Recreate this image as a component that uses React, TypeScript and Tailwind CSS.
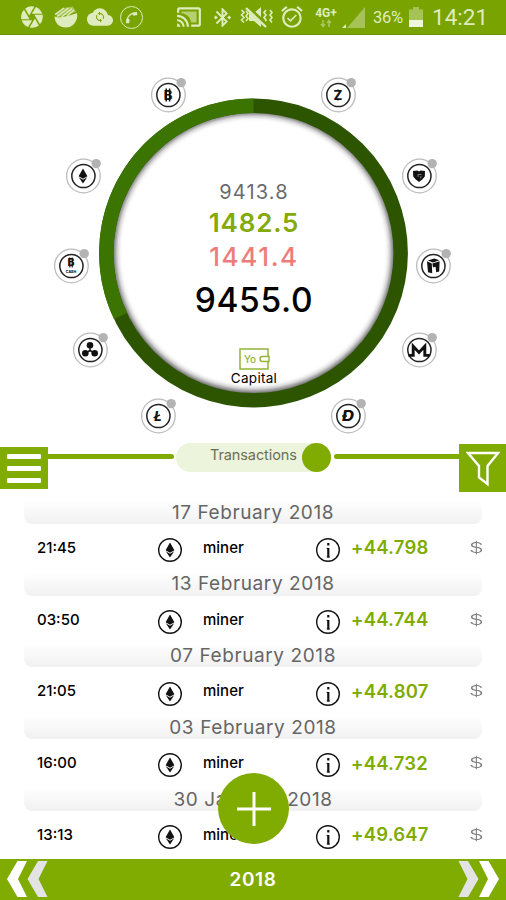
import React from 'react';
import {
  MdAlarmOn,
  MdBluetoothConnected,
  MdCamera,
  MdCast,
  MdCloud,
  MdPhone,
  MdSync,
} from 'react-icons/md';

const transactions = [
  { date: '17 February 2018', time: '21:45', name: 'miner', amount: '+44.798' },
  { date: '13 February 2018', time: '03:50', name: 'miner', amount: '+44.744' },
  { date: '07 February 2018', time: '21:05', name: 'miner', amount: '+44.807' },
  { date: '03 February 2018', time: '16:00', name: 'miner', amount: '+44.732' },
  { date: '30 January 2018', time: '13:13', name: 'miner', amount: '+49.647' },
];

const coins = [
  { id: 'btc', position: 'left-[150px] top-[42px]' },
  { id: 'zec', position: 'left-[320px] top-[42px]' },
  { id: 'eth', position: 'left-[65px] top-[123px]' },
  { id: 'nav', position: 'left-[401px] top-[123px]' },
  { id: 'bch', position: 'left-[53px] top-[213px]' },
  { id: 'neo', position: 'left-[415px] top-[213px]' },
  { id: 'xrp', position: 'left-[72px] top-[297px]' },
  { id: 'xmr', position: 'left-[401px] top-[297px]' },
  { id: 'ltc', position: 'left-[140px] top-[363px]' },
  { id: 'dash', position: 'left-[330px] top-[363px]' },
];

const EthMark = () => (
  <g fill="#111">
    <path d="M0 -7.5 L4.4 0.2 L0 2.8 L-4.4 0.2 Z" />
    <path d="M-4.2 1.2 L0 3.7 L4.2 1.2 L0 7.6 Z" />
  </g>
);

const CoinMark = ({ id }: { id: string }) => {
  switch (id) {
    case 'btc':
      return (
        <g>
          <path d="M-1.8 -6.6V6.6M1.6 -6.6V6.6" stroke="#111" strokeWidth="1.5" />
          <text y="4.7" textAnchor="middle" fontSize="13" fontWeight="800">
            B
          </text>
        </g>
      );
    case 'zec':
      return (
        <g>
          <text y="4.6" textAnchor="middle" fontSize="13" fontWeight="800">
            Z
          </text>
          <path d="M0 -5.6V-4M0 4V5.6" stroke="#111" strokeWidth="1.4" />
        </g>
      );
    case 'eth':
      return <EthMark />;
    case 'nav':
      return (
        <g>
          <path
            d="M-6 -5 L-1.5 -5.6 L0 -4.6 L1.5 -5.6 L6 -5 L5.8 0.5 L3.5 3.2 L0 6 L-3.5 3.2 L-5.8 0.5 Z"
            fill="#111"
          />
          <path d="M-1 1V-1.6L2.6 -1.4M1.5 2.4L2 0" stroke="#999" strokeWidth="0.8" fill="none" />
        </g>
      );
    case 'bch':
      return (
        <g>
          <path d="M-1.2 -8.5V1.5M1.2 -8.5V1.5" stroke="#111" strokeWidth="1.1" />
          <text y="0.2" textAnchor="middle" fontSize="10.5" fontWeight="800">
            B
          </text>
          <text y="7" textAnchor="middle" fontSize="3.6" fontWeight="800">
            CASH
          </text>
        </g>
      );
    case 'neo':
      return (
        <g fill="#111">
          <path d="M-6 -4.8 L-5 6.2 L-0.8 7.2 L-1.2 -2.6 Z" />
          <path d="M-5.2 -5.4 L1.2 -7.4 L6.4 -5.8 L0 -3.4 Z" />
          <path d="M-0.6 -2.4 L6.6 -4.8 L6.2 5.4 L3.2 6.2 L2.6 0.8 L0 1.4 Z" />
        </g>
      );
    case 'xrp':
      return (
        <g fill="#111">
          <path d="M0 -5V0.5L-5 3.5M0 0.5L5 3.5" stroke="#111" strokeWidth="1.5" fill="none" />
          <circle cy="-4.8" r="3.3" />
          <circle cx="-4.7" cy="3.2" r="3.3" />
          <circle cx="4.7" cy="3.2" r="3.3" />
        </g>
      );
    case 'xmr':
      return (
        <path
          d="M-10.6 5.4H-5.8V-3.8L0 2.4L5.8 -3.8V5.4H10.6"
          stroke="#111"
          strokeWidth="2.9"
          fill="none"
        />
      );
    case 'ltc':
      return (
        <g>
          <text y="4.8" textAnchor="middle" fontSize="13" fontWeight="800" fontStyle="italic">
            L
          </text>
          <path d="M-4.4 1.8L2 -1.2" stroke="#111" strokeWidth="1.4" />
        </g>
      );
    default:
      return (
        <g>
          <text
            x="-6"
            y="4.9"
            textLength="12"
            lengthAdjust="spacingAndGlyphs"
            fontSize="14"
            fontWeight="800"
            fontStyle="italic"
          >
            D
          </text>
          <path d="M-6 0H-1" stroke="#111" strokeWidth="1.3" />
        </g>
      );
  }
};

const Coin = ({ id, position }: { id: string; position: string }) => {
  return (
    <button className={`absolute size-9 ${position}`}>
      <svg viewBox="-18 -18 36 36" className="size-9 overflow-visible" fill="#111">
        <circle cx="0.4" r="16.8" fill="#fff" stroke="#bcbcbc" strokeWidth="1.3" />
        <circle cx="0.4" r="11.6" fill="none" stroke="#222" strokeWidth="1.5" />
        <circle cx="13.2" cy="-12.4" r="4.7" fill="#b3b3b3" />
        <CoinMark id={id} />
      </svg>
    </button>
  );
};

const StatusBar = () => {
  return (
    <header className="flex h-[35px] shrink-0 items-center border-b border-[#6c9100] bg-[#79a300] pl-[19px] font-[Roboto,sans-serif] text-[#dfecbd]">
      <MdCamera className="size-[26px]" />
      <svg viewBox="0 0 24 24" className="ml-[9px] size-6" fill="currentColor">
        <path d="M0.5 11.5C5 14 18 10 23 8C24.5 14 20 22.5 12 22.5C5 22.5 0.8 18 0.5 11.5Z" />
        <path
          d="M1 9.5L10 3M3 11.5L14.5 3M7.5 12L18 3.5M13 11L20 5"
          stroke="currentColor"
          strokeWidth="1.5"
        />
        <path d="M9 3L19 1.5L22 7L5 12L1 9.5Z" opacity="0.45" />
      </svg>
      <div className="relative ml-[9px] size-[26px]">
        <MdCloud className="size-[26px]" />
        <MdSync className="absolute left-[7px] top-[7px] size-3 text-[#79a300]" />
      </div>
      <div className="ml-[7px] flex size-[23px] items-center justify-center rounded-full border-[1.5px] border-current">
        <MdPhone className="size-[15px] -scale-x-100 rotate-180" />
      </div>
      {/* cast, with the lit screen area */}
      <div className="relative ml-[33px] size-[26px]">
        <MdCast className="size-[26px]" />
        <svg viewBox="0 0 24 24" className="absolute inset-0" fill="currentColor">
          <path d="M5 7H19V17H14C13 12 10 9 5 8.5Z" opacity="0.6" />
        </svg>
      </div>
      <MdBluetoothConnected className="ml-[9px] size-[23px]" />
      <svg viewBox="0 0 34 24" className="ml-[6px] h-6 w-[34px]" fill="currentColor">
        <path d="M9 8H14L21 2V22L14 16H9Z" />
        <path
          d="M1.5 5L4 7.5L1.5 10L4 12.5L1.5 15L4 17.5M6 6L8 8.5L6 11L8 13.5L6 16M26 5L24 7.5L26 10L24 12.5L26 15L24 17.5M30 5L32 7.5L30 10L32 12.5L30 15L32 17.5"
          stroke="currentColor"
          strokeWidth="1.6"
          fill="none"
        />
        <path d="M7 2L27 21" stroke="#79a300" strokeWidth="4.5" />
        <path d="M6 3L26 22" stroke="currentColor" strokeWidth="2.4" />
      </svg>
      <MdAlarmOn className="ml-[5px] size-[26px]" />
      <div className="ml-[9px] flex w-6 flex-col items-center">
        <span className="text-[12px] leading-3 font-bold">4G+</span>
        <svg viewBox="0 0 12 9" className="h-[9px] w-3 text-[#a9c65b]" fill="none" stroke="currentColor" strokeWidth="1.6">
          <path d="M3 1V7M1 5L3 7.5L5 5M9 8V2M7 4L9 1.5L11 4" />
        </svg>
      </div>
      <svg viewBox="0 0 23 22" className="ml-1 h-[22px] w-[23px]">
        <path d="M5 22L23 1V22Z" fill="#a6c455" />
        <path d="M0 22L4 18V22Z" fill="currentColor" />
      </svg>
      <span className="ml-2 w-8 pt-[2px] text-[16.5px] tracking-[-0.3px]">36%</span>
      <svg viewBox="0 0 14 20" className="ml-1 h-5 w-3.5">
        <path d="M4 0H10V2.5H14V13H0V2.5H4Z" fill="#a6c455" />
        <path d="M0 13H14V20H0Z" fill="#f0f6dd" />
      </svg>
      <span className="ml-[9px] pt-px text-[22.5px]">14:21</span>
    </header>
  );
};

const CapitalWheel = () => {
  return (
    <section className="relative h-[408px] shrink-0">
      <svg viewBox="0 0 506 408" className="h-[408px] w-[506px]" fill="none">
        <defs>
          <filter id="soft" x="-10%" y="-10%" width="120%" height="120%">
            <feGaussianBlur stdDeviation="3.2" />
          </filter>
          <clipPath id="disc">
            <circle cx="253.5" cy="218" r="141" />
          </clipPath>
        </defs>
        <g clipPath="url(#disc)">
          <circle cx="253.5" cy="217.5" r="142" stroke="#222" strokeWidth="6" filter="url(#soft)" />
        </g>
        <circle cx="253.5" cy="218" r="147.2" stroke="#2d5500" strokeWidth="14.4" />
        <path d="M120.5 281A147.2 147.2 0 0 1 253.5 70.8" stroke="#3b7400" strokeWidth="14.4" />
      </svg>
      {coins.map((coin) => (
        <Coin key={coin.id} {...coin} />
      ))}
      {/* totals */}
      <div className="absolute left-[155px] top-[143px] flex w-[198px] flex-col items-center">
        <span className="text-[20px] leading-[28px] tracking-[1.1px] text-[#6b6b6b]">9413.8</span>
        <span className="text-[26px] leading-[33px] font-semibold tracking-[0.8px] text-[#83aa08]">
          1482.5
        </span>
        <span className="text-[26px] leading-[35px] font-medium tracking-[1.6px] text-[#ee7c7c]">
          1441.4
        </span>
        <span className="mt-1 text-[33.5px] leading-[44px] font-medium tracking-[0.7px] text-black">
          9455.0
        </span>
        <svg viewBox="0 0 31 22" className="mt-[26px] h-[22px] w-[31px]" fill="none" stroke="#94b43a" strokeWidth="1.5">
          <path d="M29 8V1H1V21H29V14" />
          <path d="M30 8.5H23.5A2.5 2.5 0 0 0 23.5 13.5H30Z" />
          <text x="5" y="14.5" fontSize="10" fontWeight="500" fill="#94b43a" stroke="none">
            Yo
          </text>
        </svg>
        <span className="text-[13.5px] leading-4 tracking-[0.3px] text-black">Capital</span>
      </div>
    </section>
  );
};

const Toolbar = () => {
  return (
    <section className="flex h-[49px] shrink-0 items-start">
      <button className="mt-1 flex h-[42px] w-12 flex-col items-center justify-center gap-[7px] bg-[#80ab00]">
        <span className="h-[5px] w-[34px] rounded-[1px] bg-white" />
        <span className="h-[5px] w-[34px] rounded-[1px] bg-white" />
        <span className="h-[5px] w-[34px] rounded-[1px] bg-white" />
      </button>
      <div className="mt-[11px] h-[5px] w-[126px] rounded-r-full bg-[#80ab00]" />
      <div className="ml-[2px] flex h-[28.5px] w-[155px] items-center rounded-full bg-[#edf4dc]">
        <span className="ml-[34px] w-[92px] pb-[4px] text-[14.5px] leading-5 tracking-[-0.1px] text-[#68705a]">
          Transactions
        </span>
        <span className="size-[28.5px] shrink-0 rounded-full bg-[#80ab00]" />
      </div>
      <div className="ml-[3px] mt-[11px] h-[5px] flex-1 rounded-l-full bg-[#80ab00]" />
      <button className="mt-px flex h-12 w-[47px] justify-center bg-[#80ab00] pt-[7px]">
        <svg viewBox="0 0 34 36" className="h-9 w-[34px]" fill="none" stroke="#fff" strokeWidth="2.4">
          <path d="M2 2H32L21.5 15V33L13 26.5V15Z" />
        </svg>
      </button>
    </section>
  );
};

const Transaction = ({ date, time, name, amount }: (typeof transactions)[number]) => {
  return (
    <li className="h-[71.7px]">
      <h2 className="mx-6 flex h-6 items-center justify-center rounded-lg bg-linear-to-b from-white to-[#f1f1f1] pt-[2px] text-[19px] tracking-[0.6px] text-[#656565]">
        {date}
      </h2>
      <div className="flex h-[47.7px] items-center pt-px pl-[37px] text-[15px] font-medium text-black">
        <span className="w-[120px]">{time}</span>
        <svg viewBox="-13 -13 26 26" className="mt-1 size-[26px]" fill="none">
          <circle r="11.3" stroke="#111" strokeWidth="1.4" />
          <EthMark />
        </svg>
        <span className="ml-5 w-[112px]">{name}</span>
        <svg viewBox="-13 -13 26 26" className="mt-1 size-[26px]" fill="none" stroke="#111">
          <circle r="11.3" strokeWidth="1.4" />
          <path d="M0.3 -7V-4.4M0.3 -2V7.4" strokeWidth="2.2" />
          <path d="M-1.4 -1.6H0.3M-1.2 7H1.8" strokeWidth="1" />
        </svg>
        <span className="ml-[10px] w-[118px] text-[18.5px] font-semibold tracking-[0.2px] text-[#80ab00]">
          {amount}
        </span>
        <span className="origin-left scale-x-155 text-[15px] font-light text-[#7d7d7d]">$</span>
      </div>
    </li>
  );
};

const Chevrons = ({ className }: { className: string }) => (
  <svg viewBox="0 0 41 36" className={className}>
    <path d="M10.5 0H20L11 18L20 36H10.5L0 18Z" fill="#fff" />
    <path d="M31 0H40.5L31.5 18L40.5 36H31L20.5 18Z" fill="#e3e3e3" />
  </svg>
);

const App = () => {
  return (
    <main className="relative flex h-[900px] w-[506px] flex-col overflow-hidden bg-white font-[Inter,sans-serif]">
      <StatusBar />
      <CapitalWheel />
      <Toolbar />
      <ul className="mt-2 h-[358.5px] shrink-0">
        {transactions.map((transaction) => (
          <Transaction key={transaction.date} {...transaction} />
        ))}
      </ul>
      <footer className="flex flex-1 items-center justify-between bg-[#80ab00] px-[7px]">
        <Chevrons className="h-9 w-[41px]" />
        <span className="pt-px text-[19px] font-semibold tracking-[0.6px] text-white">2018</span>
        <Chevrons className="h-9 w-[41px] rotate-180" />
      </footer>
      {/* add transaction */}
      <button className="absolute left-[218px] top-[773px] flex size-[71px] items-center justify-center rounded-full bg-[#80ab00]">
        <svg viewBox="0 0 34 34" className="size-[34px]" stroke="#fff" strokeWidth="3">
          <path d="M17 0V34M0 17H34" />
        </svg>
      </button>
    </main>
  );
};

export default App;
